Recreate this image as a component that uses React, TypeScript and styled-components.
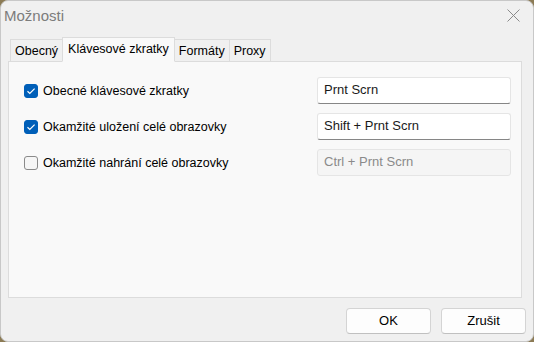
import React from "react";
import styled, { createGlobalStyle } from "styled-components";

const GlobalStyle = createGlobalStyle`
  html, body {
    margin: 0;
    padding: 0;
    width: 534px;
    height: 342px;
    overflow: hidden;
    background: #8c7b55;
  }
`;

const Window = styled.div`
  width: 534px;
  height: 342px;
  box-sizing: border-box;
  background: #f0f0f0;
  border: 1px solid #c8c8c8;
  border-radius: 8px;
  display: flex;
  flex-direction: column;
  font-family: "Liberation Sans", Arial, sans-serif;
  font-size: 12.5px;
  color: #000;
  overflow: hidden;
`;

const TitleBar = styled.div`
  height: 28px;
  display: flex;
  align-items: center;
  justify-content: space-between;
  padding: 0 13px 0 3px;
`;

const Title = styled.span`
  font-size: 15px;
  color: #7c7c7c;
`;

const CloseButton = styled.div`
  width: 14px;
  height: 14px;
  display: flex;
  align-items: center;
  justify-content: center;
`;

const Body = styled.div`
  flex: 1;
  display: flex;
  flex-direction: column;
  padding: 8px 11px 0 7px;
`;

const TabRow = styled.div`
  display: flex;
  align-items: flex-end;
  height: 24px;
  padding-left: 3px;
  position: relative;
  z-index: 1;
`;

const Tab = styled.div<{ active?: boolean }>`
  box-sizing: border-box;
  height: ${({ active }) => (active ? "25px" : "22px")};
  padding: 0 ${({ active }) => (active ? "5px" : "4px")};
  display: flex;
  align-items: center;
  padding-bottom: ${({ active }) => (active ? "2px" : "0")};
  background: ${({ active }) => (active ? "#f9f9f9" : "#f0f0f0")};
  border: 1px solid #dcdcdc;
  border-bottom: ${({ active }) => (active ? "1px solid #f9f9f9" : "none")};
  margin-left: -1px;
  margin-bottom: ${({ active }) => (active ? "-1px" : "0")};
  color: #000;
`;

const Panel = styled.div`
  box-sizing: border-box;
  height: 237px;
  background: #f9f9f9;
  border: 1px solid #dcdcdc;
  padding: 15px 10px 0 15px;
  display: flex;
  flex-direction: column;
  gap: 9px;
`;

const Row = styled.div`
  display: flex;
  align-items: center;
  justify-content: space-between;
  height: 27px;
`;

const CheckLabel = styled.label`
  display: flex;
  align-items: center;
  gap: 5px;
  color: #000;
`;

const Box = styled.span<{ checked?: boolean }>`
  box-sizing: border-box;
  width: 14px;
  height: 14px;
  border-radius: 3px;
  display: flex;
  align-items: center;
  justify-content: center;
  background: ${({ checked }) => (checked ? "#005fb8" : "#f6f6f6")};
  border: 1px solid ${({ checked }) => (checked ? "#005fb8" : "#8a8a8a")};
`;

const KeyField = styled.div<{ disabled?: boolean }>`
  box-sizing: border-box;
  width: 194px;
  height: 27px;
  display: flex;
  align-items: center;
  padding: 0 0 2px 6px;
  border-radius: 3px;
  font-size: 13px;
  background: ${({ disabled }) => (disabled ? "#f5f5f5" : "#ffffff")};
  border: 1px solid #e5e5e5;
  border-bottom: 1px solid ${({ disabled }) => (disabled ? "#e5e5e5" : "#868686")};
  color: ${({ disabled }) => (disabled ? "#8a8a8a" : "#1a1a1a")};
`;

const Footer = styled.div`
  flex: 1;
  display: flex;
  justify-content: flex-end;
  align-items: center;
  gap: 10px;
  margin-right: -4px;
  padding-top: 2px;
`;

const Button = styled.button`
  box-sizing: border-box;
  width: 85px;
  height: 26px;
  border-radius: 4px;
  background: #fdfdfd;
  border: 1px solid #d4d4d4;
  border-bottom-color: #c0c0c0;
  font-family: "Liberation Sans", Arial, sans-serif;
  font-size: 13px;
  color: #000;
  padding: 0;
`;

const Check = () => (
  <svg width="10" height="8" viewBox="0 0 10 8">
    <path d="M1.5 4.2 L3.8 6.4 L8.6 1.6" fill="none" stroke="#fff" strokeWidth="1.2" />
  </svg>
);

const shortcuts = [
  { label: "Obecné klávesové zkratky", keys: "Prnt Scrn", checked: true },
  { label: "Okamžité uložení celé obrazovky", keys: "Shift + Prnt Scrn", checked: true },
  { label: "Okamžité nahrání celé obrazovky", keys: "Ctrl + Prnt Scrn", checked: false },
];

const tabs = ["Obecný", "Klávesové zkratky", "Formáty", "Proxy"];

export default function App() {
  return (
    <>
      <GlobalStyle />
      <Window>
        <TitleBar>
          <Title>Možnosti</Title>
          <CloseButton>
            <svg width="13" height="13" viewBox="0 0 13 13">
              <path d="M0.5 0.5 L12.5 12.5 M12.5 0.5 L0.5 12.5" stroke="#8a8a8a" strokeWidth="1" />
            </svg>
          </CloseButton>
        </TitleBar>
        <Body>
          <TabRow>
            {tabs.map((t, i) => (
              <Tab key={t} active={i === 1}>
                {t}
              </Tab>
            ))}
          </TabRow>
          <Panel>
            {shortcuts.map((s) => (
              <Row key={s.label}>
                <CheckLabel>
                  <Box checked={s.checked}>{s.checked && <Check />}</Box>
                  {s.label}
                </CheckLabel>
                <KeyField disabled={!s.checked}>{s.keys}</KeyField>
              </Row>
            ))}
          </Panel>
          <Footer>
            <Button>OK</Button>
            <Button>Zrušit</Button>
          </Footer>
        </Body>
      </Window>
    </>
  );
}
